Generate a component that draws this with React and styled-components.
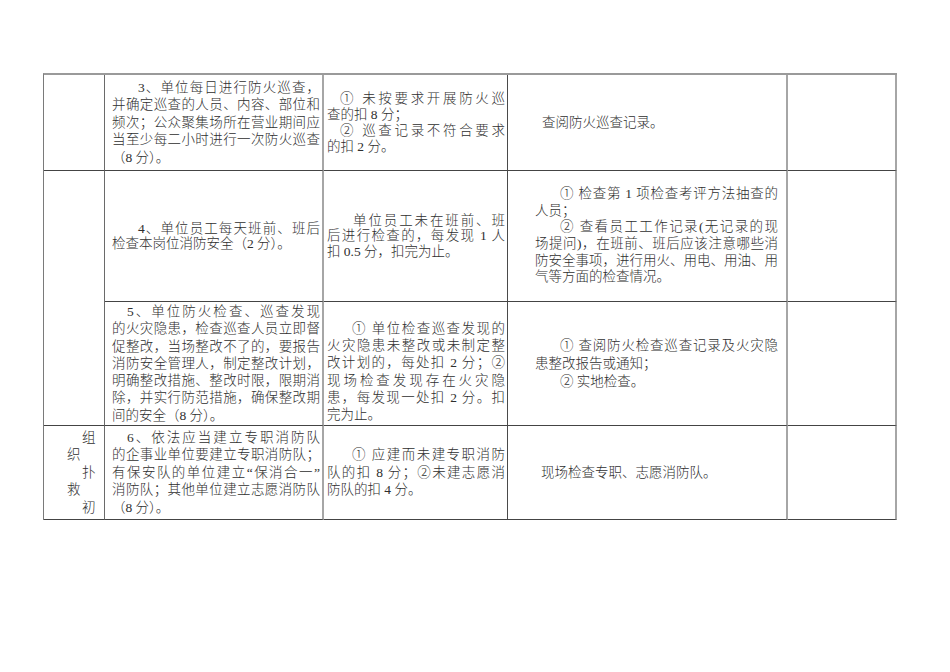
import React from "react";
import styled, { createGlobalStyle } from "styled-components";

const GlobalStyle = createGlobalStyle`
  html, body {
    margin: 0;
    padding: 0;
    background: #ffffff;
  }
`;

// 칸 별 안쪽 여백 / 오른쪽 선
const COLUMNS = [
  { pad: "0", rule: "1px solid #6a6a6a" },
  { pad: "0 2px 0 7px", rule: "2px solid #a6a6a6" },
  { pad: "0 2px 0 3px", rule: "1px solid #4a4a4a" },
  { pad: "0 8px 0 27px", rule: "2px solid #a6a6a6" },
  { pad: "0", rule: "2px solid #a6a6a6" },
];

const ROWS = [
  {
    cells: [
      null,
      { lh: 17.6, paras: [{ indent: 26, lines: ["3、单位每日进行防火巡查，", "并确定巡查的人员、内容、部位和", "频次；公众聚集场所在营业期间应", "当至少每二小时进行一次防火巡查", "（8 分）。"] }] },
      { lh: 16, paras: [
        { indent: 13, lines: ["① 未按要求开展防火巡", "查的扣 8 分；"] },
        { indent: 13, lines: ["② 巡查记录不符合要求", "的扣 2 分。"] },
      ] },
      { lh: 17, paras: [{ indent: 7, lines: ["查阅防火巡查记录。"] }] },
      null,
    ],
  },
  {
    cells: [
      { span: 2 },
      { lh: 15.5, paras: [{ indent: 26, lines: ["4、单位员工每天班前、班后", "检查本岗位消防安全（2 分）。"] }] },
      { lh: 15.5, paras: [{ indent: 26, lines: ["单位员工未在班前、班", "后进行检查的，每发现 1 人", "扣 0.5 分，扣完为止。"] }] },
      { lh: 16.6, paras: [
        { indent: 25, lines: ["①  检查第 1 项检查考评方法抽查的", "人员；"] },
        { indent: 25, lines: ["②  查看员工工作记录(无记录的现", "场提问)，在班前、班后应该注意哪些消", "防安全事项，进行用火、用电、用油、用", "气等方面的检查情况。"] },
      ] },
      null,
    ],
  },
  {
    cells: [
      { lh: 17.2, paras: [{ indent: 15, lines: ["5、单位防火检查、巡查发现", "的火灾隐患，检查巡查人员立即督", "促整改，当场整改不了的，要报告", "消防安全管理人，制定整改计划，", "明确整改措施、整改时限，限期消", "除，并实行防范措施，确保整改期", "间的安全（8 分）。"] }] },
      { lh: 17.2, top: 16, paras: [{ indent: 25, lines: ["① 单位检查巡查发现的", "火灾隐患未整改或未制定整", "改计划的，每处扣 2 分；②", "现场检查发现存在火灾隐", "患，每发现一处扣 2 分。扣", "完为止。"] }] },
      { lh: 18, paras: [
        { indent: 25, lines: ["①  查阅防火检查巡查记录及火灾隐", "患整改报告或通知；"] },
        { indent: 25, lines: ["②  实地检查。"] },
      ] },
      null,
    ],
  },
  {
    cells: [
      { stack: ["组", "织", "扑", "救", "初"] },
      { lh: 17.5, paras: [{ indent: 15, lines: ["6、依法应当建立专职消防队", "的企事业单位要建立专职消防队；", "有保安队的单位建立“保消合一”", "消防队；其他单位建立志愿消防队", "（8 分）。"] }] },
      { lh: 17.5, paras: [{ indent: 25, lines: ["① 应建而未建专职消防", "队的扣 8 分；②未建志愿消", "防队的扣 4 分。"] }] },
      { lh: 17, paras: [{ indent: 6, lines: ["现场检查专职、志愿消防队。"] }] },
      null,
    ],
  },
];

function Paragraph({ indent, lines }) {
  return (
    <>
      {lines.map((text, i) => (
        <Line key={i} $fill={i < lines.length - 1} $indent={i === 0 ? indent : 0}>
          {text}
        </Line>
      ))}
    </>
  );
}

function SheetCell({ cell, col }) {
  const conf = COLUMNS[col];
  if (cell && cell.stack) {
    return (
      <Cell $pad={conf.pad} $rule={conf.rule} $lh={17.5}>
        {cell.stack.map((ch, i) => (
          <StackChar key={i} $shift={i % 2 === 0 ? 38 : 23}>{ch}</StackChar>
        ))}
      </Cell>
    );
  }
  return (
    <Cell
      $pad={conf.pad}
      $rule={conf.rule}
      $lh={cell ? cell.lh : 17}
      $span={cell && cell.span}
      $top={cell && cell.top}
    >
      {cell && cell.paras && cell.paras.map((p, i) => <Paragraph key={i} {...p} />)}
    </Cell>
  );
}

export default function App() {
  return (
    <>
      <GlobalStyle />
      <Page lang="zh-CN">
        <Sheet>
          {ROWS.map((row, r) =>
            row.cells.map((cell, c) => {
              // 두번째 행에서 첫 칸이 병합되어 세번째 행은 4칸만 있음
              const col = row.cells.length === 4 ? c + 1 : c;
              return <SheetCell key={`${r}-${c}`} cell={cell} col={col} />;
            })
          )}
        </Sheet>
      </Page>
    </>
  );
}

const Page = styled.div`
  width: 950px;
  min-height: 672px;
  box-sizing: border-box;
  padding: 73px 0 0 43px;
  background: #ffffff;
  font-family: "Liberation Serif", "Noto Sans CJK SC", serif;
  font-size: 13.5px;
  font-weight: 300;
  color: #2e2e2e;
`;

const Sheet = styled.div`
  display: grid;
  grid-template-columns: 61px 219px 184px 280px 109px;
  grid-template-rows: 96px 131px 124px 94px;
  width: 854px;
  box-sizing: border-box;
  border-top: 2px solid #9a9a9a;
  border-left: 1px solid #7a7a7a;
`;

const Cell = styled.div`
  box-sizing: border-box;
  display: flex;
  flex-direction: column;
  justify-content: center;
  padding: ${p => p.$pad};
  padding-top: ${p => (p.$top ? `${p.$top}px` : undefined)};
  border-right: ${p => p.$rule};
  border-bottom: 1px solid #444444;
  line-height: ${p => p.$lh}px;
  grid-row: ${p => (p.$span ? `span ${p.$span}` : "auto")};
  overflow: hidden;
`;

const Line = styled.div`
  white-space: nowrap;
  padding-left: ${p => p.$indent}px;
  text-align: ${p => (p.$fill ? "justify" : "left")};
  text-align-last: ${p => (p.$fill ? "justify" : "auto")};
`;

const StackChar = styled.div`
  padding-left: ${p => p.$shift}px;
`;
